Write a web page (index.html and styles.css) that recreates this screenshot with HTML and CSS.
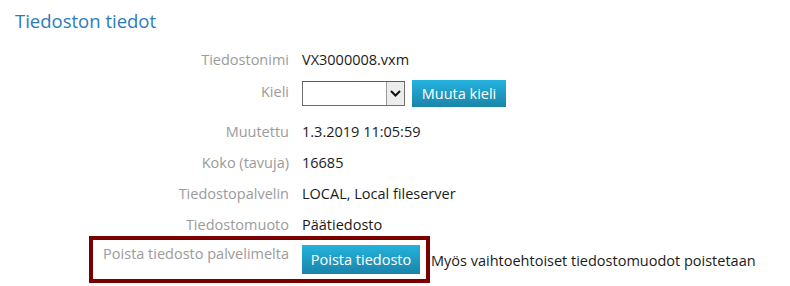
FILE: index.html
```html
<!DOCTYPE html>
<html lang="fi">
<head>
<meta charset="utf-8">
<title>Tiedoston tiedot</title>
<link rel="stylesheet" href="styles.css">
</head>
<body>
<div class="page">
  <h2 class="title">Tiedoston tiedot</h2>
  <div class="details">
    <div class="row">
      <div class="label">Tiedostonimi</div>
      <div class="value">VX3000008.vxm</div>
    </div>
    <div class="row row-lang">
      <div class="label label-lang">Kieli</div>
      <div class="value value-lang">
        <div class="select">
          <span class="select-field"></span>
          <span class="select-arrow">
            <svg width="11" height="7" viewBox="0 0 11 7"><path d="M1 1 L5.5 5.5 L10 1" fill="none" stroke="#111" stroke-width="2"/></svg>
          </span>
        </div>
        <button class="btn btn-lang" type="button">Muuta kieli</button>
      </div>
    </div>
    <div class="row">
      <div class="label">Muutettu</div>
      <div class="value">1.3.2019 11:05:59</div>
    </div>
    <div class="row">
      <div class="label">Koko (tavuja)</div>
      <div class="value">16685</div>
    </div>
    <div class="row">
      <div class="label">Tiedostopalvelin</div>
      <div class="value">LOCAL, Local fileserver</div>
    </div>
    <div class="row">
      <div class="label">Tiedostomuoto</div>
      <div class="value">Päätiedosto</div>
    </div>
    <div class="row row-delete">
      <div class="frame">
        <div class="label label-delete">Poista tiedosto palvelimelta</div>
        <button class="btn btn-delete" type="button">Poista tiedosto</button>
      </div>
      <div class="note">Myös vaihtoehtoiset tiedostomuodot poistetaan</div>
    </div>
  </div>
</div>
</body>
</html>
```

FILE: styles.css
```css
html, body {
  margin: 0;
  padding: 0;
  background: #ffffff;
}

body {
  font-family: "Open Sans", "Noto Sans", "Liberation Sans", sans-serif;
  font-size: 14.5px;
  color: #1b1b1b;
}

.page {
  padding: 8px 0 0 15px;
}

.title {
  margin: 0;
  font-weight: 400;
  font-size: 18.5px;
  line-height: 26px;
  color: #2b7bbd;
}

.details {
  padding-top: 10px;
  margin-left: 84px;
}

.row {
  display: flex;
  align-items: flex-start;
  column-gap: 13px;
}

.label {
  width: 190px;
  flex: none;
  text-align: right;
  color: #9b9b9b;
  padding: 5px 0;
  line-height: 21px;
}

.value {
  padding: 5px 0;
  line-height: 21px;
  white-space: nowrap;
}

.label-lang {
  padding-top: 6px;
}

.value-lang {
  display: flex;
  align-items: center;
  column-gap: 7px;
  padding: 5px 0 9px;
}

.select {
  display: flex;
  width: 103px;
  height: 25px;
  box-sizing: border-box;
  border: 1px solid #6e6e6e;
  border-top-color: #5a5a5a;
  background: #ffffff;
}

.select-field {
  flex: 1;
}

.select-arrow {
  width: 17px;
  display: flex;
  align-items: center;
  justify-content: center;
  background: #ececec;
  border-left: 1px solid #9a9a9a;
}

.btn {
  font-family: inherit;
  font-size: 14.5px;
  color: #ffffff;
  border: 0;
  border-radius: 0;
  margin: 0;
  padding: 3px 0;
  line-height: 21px;
  white-space: nowrap;
  text-align: center;
  background: linear-gradient(#24b3de, #1a84a9);
  cursor: pointer;
  flex: none;
}

.btn-delete {
  padding: 4px 0;
  width: 118px;
}

.btn-lang {
  width: 94px;
}

.row-delete {
  margin-top: -4px;
  column-gap: 0;
}

.frame {
  display: flex;
  align-items: flex-start;
  column-gap: 13px;
  margin-left: -10px;
  padding: 5px 6px;
  border: 4px solid #7a0000;
}

.label-delete {
  padding: 0;
  margin-top: -2px;
}

.note {
  padding-top: 14px;
  padding-left: 1px;
  line-height: 21px;
  white-space: nowrap;
}
```
